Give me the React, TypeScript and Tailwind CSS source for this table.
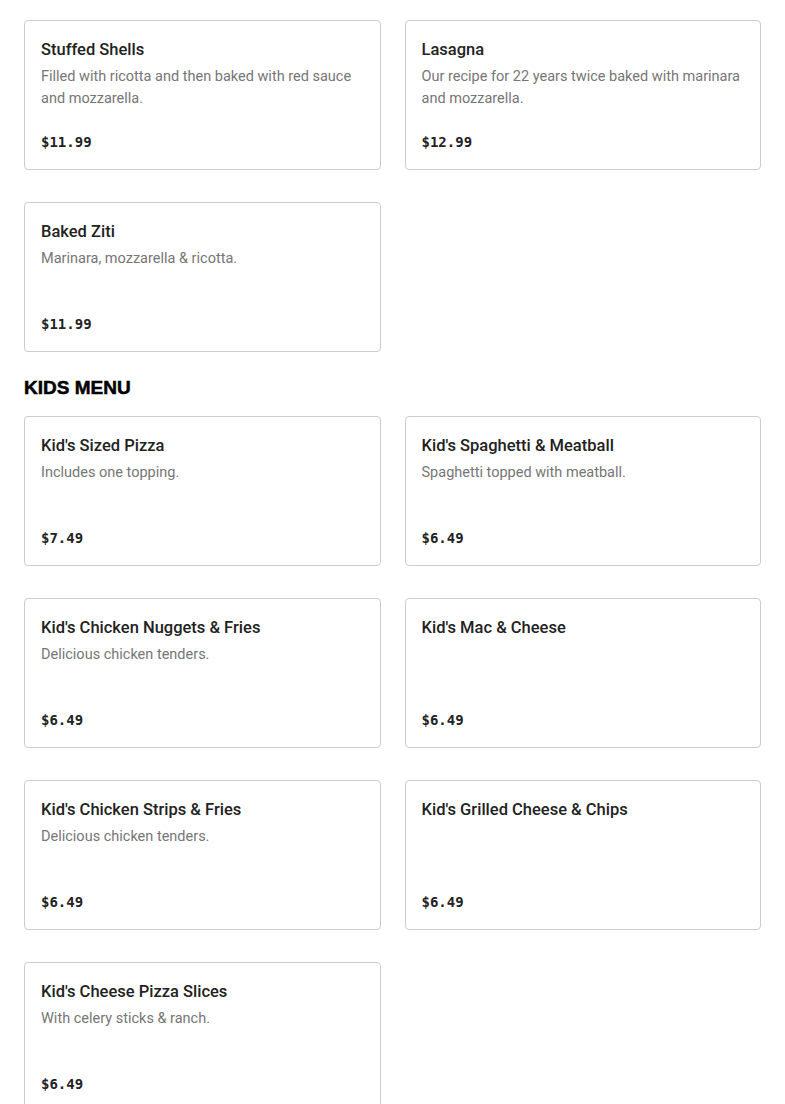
import React from "react";

type Item = { name: string; desc?: string; price: string };

const top: Item[] = [
  { name: "Stuffed Shells", desc: "Filled with ricotta and then baked with red sauce and mozzarella.", price: "$11.99" },
  { name: "Lasagna", desc: "Our recipe for 22 years twice baked with marinara and mozzarella.", price: "$12.99" },
  { name: "Baked Ziti", desc: "Marinara, mozzarella & ricotta.", price: "$11.99" },
];

const kids: Item[] = [
  { name: "Kid's Sized Pizza", desc: "Includes one topping.", price: "$7.49" },
  { name: "Kid's Spaghetti & Meatball", desc: "Spaghetti topped with meatball.", price: "$6.49" },
  { name: "Kid's Chicken Nuggets & Fries", desc: "Delicious chicken tenders.", price: "$6.49" },
  { name: "Kid's Mac & Cheese", price: "$6.49" },
  { name: "Kid's Chicken Strips & Fries", desc: "Delicious chicken tenders.", price: "$6.49" },
  { name: "Kid's Grilled Cheese & Chips", price: "$6.49" },
  { name: "Kid's Cheese Pizza Slices", desc: "With celery sticks & ranch.", price: "$6.49" },
];

function Card({ item }: { item: Item }) {
  return (
    <div className="flex h-[150px] flex-col rounded border border-[#cccccc] bg-white px-4 pt-[17px] pb-4">
      <div className="text-[16.5px] leading-6 font-medium text-[#222222]">{item.name}</div>
      {item.desc && (
        <div className="mt-1 text-[14.5px] leading-[22px] text-[#767676]">{item.desc}</div>
      )}
      <div className="mt-auto font-['DejaVu_Sans_Mono',monospace] text-[14px] leading-[22px] font-bold text-[#222222]">
        {item.price}
      </div>
    </div>
  );
}

export default function App() {
  return (
    <div className="min-h-screen bg-white px-6 pt-5 pb-10 font-['Roboto',sans-serif]">
      <div className="grid grid-cols-2 gap-x-6 gap-y-8">
        {top.map((i) => (
          <Card key={i.name} item={i} />
        ))}
      </div>
      <h2 className="mt-6 mb-4 font-['Liberation_Sans',Arial,sans-serif] text-[19px] leading-6 font-black text-black [-webkit-text-stroke:0.5px_black]">
        KIDS MENU
      </h2>
      <div className="grid grid-cols-2 gap-x-6 gap-y-8">
        {kids.map((i) => (
          <Card key={i.name} item={i} />
        ))}
      </div>
    </div>
  );
}
